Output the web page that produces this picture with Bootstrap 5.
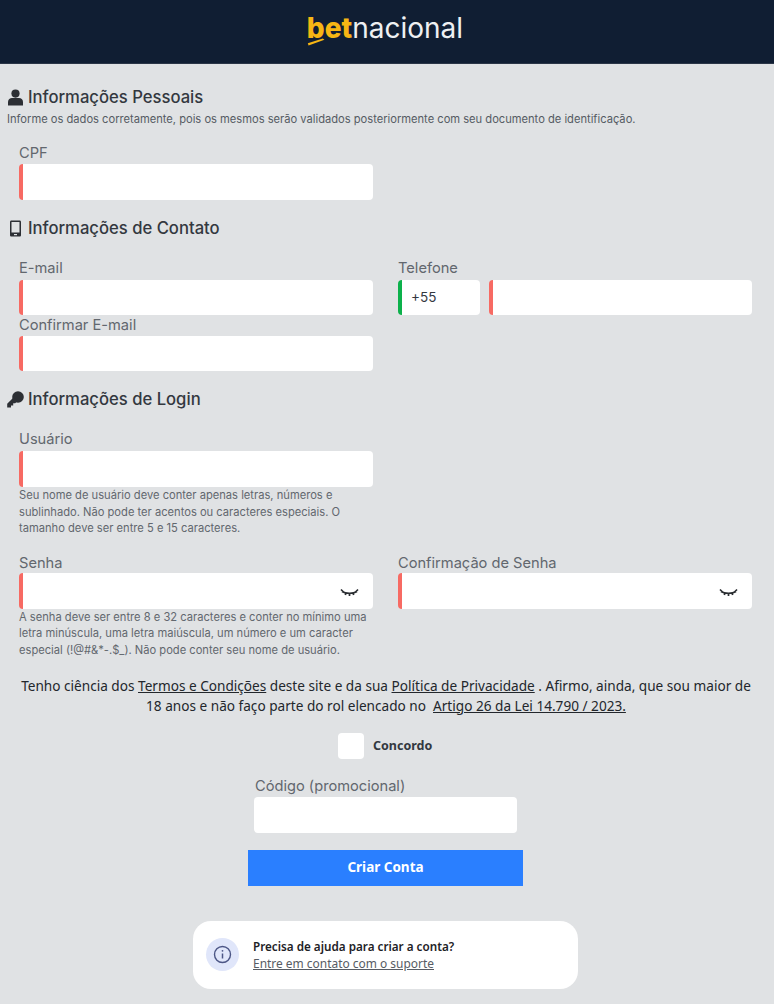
<!DOCTYPE html>
<html lang="pt-BR">
<head>
<meta charset="utf-8">
<title>betnacional - Cadastro</title>
<link href="https://cdn.jsdelivr.net/npm/bootstrap@5.3.0/dist/css/bootstrap.min.css" rel="stylesheet">
<style>
body{background:#e0e2e4;font-family:"Inter","Liberation Sans",sans-serif;color:#3a3f47;min-height:1004px;overflow:hidden}
.top-bar{background:#101e33;height:64px;border-bottom:1px solid #2a3547}
.logo-word{font-family:"Inter","Liberation Sans",sans-serif;font-size:28px;line-height:28px;color:#eef0f2;position:relative;margin:-7px 4px 0 0}
.logo-word b{color:#f7b614;font-weight:800}
.logo-word span{font-weight:400}
.logo-swoosh{position:absolute;left:0;top:24px}
.form-wrap{padding:0 22px 0 7px}
.sec-title{font-size:16.65px;font-weight:500;line-height:20px;color:#33383f;margin:0;gap:4px}
.sec-intro{font-size:11.15px;line-height:14px;color:#555b63;margin:5px 0 0;white-space:nowrap}
.field-grid{display:grid;grid-template-columns:354px 354px;column-gap:25px;padding-left:12px}
.fld-label{display:block;font-size:14.65px;line-height:16px;color:#62676e;margin:0 0 3px}
.fld-label.gap-lg{margin-bottom:4px}
.fld-label.gap-sm{margin-bottom:2.5px}
.fld{display:block;width:100%;height:35.5px;border:0;background:linear-gradient(90deg,#f76a63 4.5px,#fff 4.5px);border-radius:4px;padding:0 8px 0 13px;font-size:13.5px;color:#33383f;outline:0}
.fld.ok{background:linear-gradient(90deg,#0cb14b 4.5px,#fff 4.5px)}
.fld.plain{background:#fff;height:36px}
.dial{width:82px;flex:none}
.phone-row{gap:9px}
.hint{font-size:11.17px;line-height:16.6px;color:#62676e;margin:0}
.hint.first{margin-top:.5px}
.eye-box{position:relative}
.eye-ico{position:absolute;right:14px;top:15px}
.terms{font-family:"Noto Sans","Open Sans",sans-serif;font-size:13.62px;line-height:20px;color:#23272c;text-align:center;margin:17px -6px 0 7px}
.terms a,.help-link{color:inherit;text-decoration:underline}
.agree-row{margin:17px 0 0 331px;gap:9px}
.tick{width:26px;height:26px;background:#fff;border-radius:4px;display:block}
.tick-label{font-family:"Noto Sans",sans-serif;font-size:12.5px;font-weight:700;color:#33383f;padding-top:2px}
.promo{width:263px;margin:19px 0 0 254px}
.promo .fld-label{padding-left:1px}
.create-btn{width:275px;height:36px;margin:17px 0 0 248px;background:#2a7fff;border:0;border-radius:0;color:#fff;font-family:"Noto Sans",sans-serif;font-size:13.5px;font-weight:700;display:block}
.help-card{width:385px;height:68px;margin:35px 0 0 193px;background:#fff;border-radius:18px;padding:0 13px;gap:14px;font-family:"Noto Sans",sans-serif}
.help-ico{width:33px;height:33px;border-radius:50%;background:#e0e6fa}
.help-title{font-size:11.7px;font-weight:600;line-height:18px;color:#1d2126}
.help-link{display:block;font-size:11.95px;line-height:18px;color:#575c64}
.mt-a{margin-top:23px}.mt-b{margin-top:19px}.mt-c{margin-top:18.5px}.mt-d{margin-top:21.5px}.mt-e{margin-top:2px}.mt-f{margin-top:18px}.mt-g{margin-top:22px}
</style>
</head>
<body>
<header class="top-bar d-flex justify-content-center align-items-center">
  <div class="logo-word">
    <b>bet</b><span>nacional</span>
    <svg class="logo-swoosh" width="19" height="8" viewBox="0 0 24 10"><path d="M1 6.500 20 .5 22 2 2 9.500Z" fill="#f7b614"/></svg>
  </div>
</header>
<main class="form-wrap">
  <h2 class="sec-title d-flex align-items-center mt-a">
    <svg width="17" height="17" viewBox="0 0 17 17"><circle cx="8.500" cy="4.600" r="4.100" fill="#2c2f34"/><path d="M1 16.500V13c0-2.600 2-4 4-4h7c2 0 4 1.400 4 4v3.500Z" fill="#2c2f34"/></svg>
    Informações Pessoais
  </h2>
  <p class="sec-intro">Informe os dados corretamente, pois os mesmos serão validados posteriormente com seu documento de identificação.</p>
  <div class="field-grid mt-b">
    <div><label class="fld-label">CPF</label><input class="fld" type="text"></div>
  </div>
  <h2 class="sec-title d-flex align-items-center mt-c">
    <svg width="17" height="17" viewBox="0 0 17 17"><path fill-rule="evenodd" d="M4.500.5h8c1 0 1.500.6 1.500 1.500v13c0 1-.5 1.500-1.500 1.500h-8c-1 0-1.500-.5-1.500-1.500V2c0-.9.5-1.500 1.500-1.500ZM4.500 2v10.500h8V2Z" fill="#2c2f34"/><rect x="7" y="14" width="3" height="1.200" fill="#e0e2e4"/></svg>
    Informações de Contato
  </h2>
  <div class="field-grid mt-d">
    <div>
      <label class="fld-label gap-lg">E-mail</label><input class="fld" type="email">
      <label class="fld-label gap-sm mt-e">Confirmar E-mail</label><input class="fld" type="email">
    </div>
    <div>
      <label class="fld-label gap-lg">Telefone</label>
      <div class="d-flex phone-row">
        <input class="fld ok dial" type="text" value="+55">
        <input class="fld" type="tel">
      </div>
    </div>
  </div>
  <h2 class="sec-title d-flex align-items-center mt-f">
    <svg width="17" height="17" viewBox="0 0 17 17"><circle cx="11" cy="6" r="5.800" fill="#2c2f34"/><path d="M6.500 6.500 .2 12.800V16.500H4V14.500H6.200V12.300H8.200L10.500 10Z" fill="#2c2f34"/></svg>
    Informações de Login
  </h2>
  <div class="field-grid mt-g">
    <div>
      <label class="fld-label gap-lg">Usuário</label><input class="fld" type="text">
      <p class="hint first">Seu nome de usuário deve conter apenas letras, números e sublinhado. Não pode ter acentos ou caracteres especiais. O tamanho deve ser entre 5 e 15 caracteres.</p>
    </div>
    <div></div>
  </div>
  <div class="field-grid mt-f">
    <div>
      <label class="fld-label gap-sm">Senha</label>
      <div class="eye-box"><input class="fld" type="password">
        <svg class="eye-ico" width="19" height="10" viewBox="0 0 19 10"><path d="M2 3.500c4 2.500 11 2.500 15 0M1 1.500l2.500 2.500M18 1.500 15.500 4M6 5 5.300 7M13 5l.7 2M9.500 6V8" fill="none" stroke="#2a2d31" stroke-width="1.700"/></svg>
      </div>
      <p class="hint">A senha deve ser entre 8 e 32 caracteres e conter no mínimo uma letra minúscula, uma letra maiúscula, um número e um caracter especial (!@#&amp;*-.$_). Não pode conter seu nome de usuário.</p>
    </div>
    <div>
      <label class="fld-label gap-sm">Confirmação de Senha</label>
      <div class="eye-box"><input class="fld" type="password">
        <svg class="eye-ico" width="19" height="10" viewBox="0 0 19 10"><path d="M2 3.500c4 2.500 11 2.500 15 0M1 1.500l2.500 2.500M18 1.500 15.500 4M6 5 5.300 7M13 5l.7 2M9.500 6V8" fill="none" stroke="#2a2d31" stroke-width="1.700"/></svg>
      </div>
    </div>
  </div>
  <p class="terms">Tenho ciência dos <a href="#">Termos e Condições</a> deste site e da sua <a href="#">Política de Privacidade</a> . Afirmo, ainda, que sou maior de 18 anos e não faço parte do rol elencado no &nbsp;<a href="#">Artigo 26 da Lei 14.790 / 2023.</a></p>
  <div class="agree-row d-flex align-items-center">
    <span class="tick"></span><span class="tick-label">Concordo</span>
  </div>
</main>
<section class="promo">
  <label class="fld-label">Código (promocional)</label><input class="fld plain" type="text">
</section>
<button class="create-btn" type="button">Criar Conta</button>
<aside class="help-card d-flex align-items-center">
  <span class="help-ico d-flex align-items-center justify-content-center">
    <svg width="19" height="19" viewBox="0 0 19 19"><circle cx="9.500" cy="9.500" r="8" fill="none" stroke="#4c5686" stroke-width="1.400"/><path d="M9.500 8.500v5" stroke="#4c5686" stroke-width="1.500"/><circle cx="9.500" cy="5.800" r=".9" fill="#4c5686"/></svg>
  </span>
  <div>
    <div class="help-title">Precisa de ajuda para criar a conta?</div>
    <a class="help-link" href="#">Entre em contato com o suporte</a>
  </div>
</aside>
<script src="https://cdn.jsdelivr.net/npm/bootstrap@5.3.0/dist/js/bootstrap.bundle.min.js"></script>
</body>
</html>
